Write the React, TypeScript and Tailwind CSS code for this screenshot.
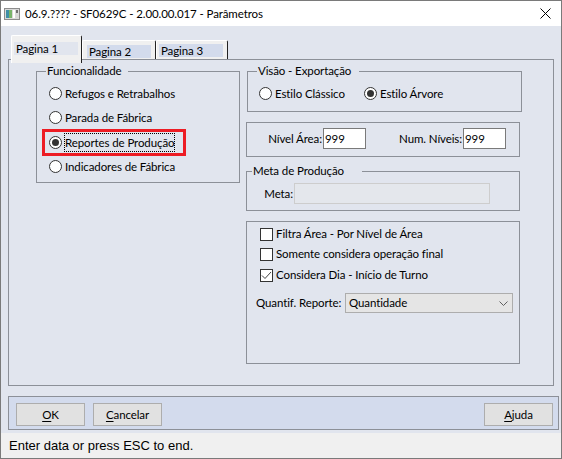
import React from "react";

const UI = "font-['Lato','Liberation_Sans',sans-serif] text-[11.5px] tracking-[-0.1px] text-black whitespace-nowrap";

function Radio({ checked }: { checked?: boolean }) {
  return (
    <span className="w-[13px] h-[13px] rounded-full border border-[#333333] bg-white flex items-center justify-center shrink-0">
      {checked && <span className="w-[7px] h-[7px] rounded-full bg-[#333333]" />}
    </span>
  );
}

function Check({ checked }: { checked?: boolean }) {
  return (
    <span className="w-[13px] h-[13px] border border-[#333333] bg-white flex items-center justify-center shrink-0">
      {checked && (
        <svg width="11" height="11" viewBox="0 0 11 11">
          <path d="M1 5.5 L4 8.5 L10 2" fill="none" stroke="#444" strokeWidth="1" />
        </svg>
      )}
    </span>
  );
}

function RadioRow({ label, checked, focused, className }: { label: string; checked?: boolean; focused?: boolean; className: string }) {
  return (
    <div className={"flex items-center " + className}>
      <Radio checked={checked} />
      <span
        className={
          "ml-[2px] px-0 leading-[17px] border " +
          (focused ? "border-dotted border-black" : "border-transparent")
        }
      >
        {label}
      </span>
    </div>
  );
}

function Tab({ label, active, className }: { label: string; active?: boolean; className: string }) {
  return (
    <div
      className={
        "border-l border-t border-r border-l-white border-t-white border-r-[#222222] bg-[#f0f0f0] rounded-tl-[2px] rounded-tr-[2px] " +
        className
      }
    >
      <div
        className={
          "w-[64px] h-[13px] leading-[13px] pl-[2px] " + (active ? "bg-[#e1e5ee]" : "bg-[#d3dbec]")
        }
      >
        {label}
      </div>
    </div>
  );
}

function Button({ first, rest }: { first: string; rest: string }) {
  return (
    <div className="w-[69px] h-[23px] bg-[#e1e1e1] border border-[#adadad] flex items-center justify-center leading-[14px]">
      <span>
        <span className="underline underline-offset-[2px]">{first}</span>
        {rest}
      </span>
    </div>
  );
}

export default function App() {
  return (
    <div className={"w-[562px] h-[459px] flex flex-col bg-[#e1e5ee] border border-[#7a7a7a] overflow-hidden " + UI}>
      {/* Title bar */}
      <div className="h-[25px] bg-white flex items-center shrink-0">
        <svg className="ml-[3px]" width="16" height="12" viewBox="0 0 16 12">
          <rect x="0.5" y="0.5" width="15" height="11" fill="#d9d9d9" stroke="#8c8c8c" />
          <rect x="2" y="2" width="6" height="8" fill="#3f8fa6" />
          <rect x="5" y="2" width="3" height="8" fill="#79b46a" />
          <rect x="9" y="2" width="2" height="8" fill="#ffffff" />
          <rect x="12" y="2" width="2" height="3" fill="#6f6f6f" />
        </svg>
        <span className="ml-[5px] leading-[14px] text-[11.5px]">06.9.???? - SF0629C - 2.00.00.017 - Parâmetros</span>
        <svg className="ml-auto mr-[10px]" width="11" height="11" viewBox="0 0 11 11">
          <path d="M0.5 0.5 L10.5 10.5 M10.5 0.5 L0.5 10.5" stroke="#000" strokeWidth="1" />
        </svg>
      </div>

      {/* Body */}
      <div className="flex flex-col pl-[7px] shrink-0">
        {/* Tab strip */}
        <div className="mt-[9px] h-[24px] flex items-end pl-[3px]">
          <Tab label="Pagina 1" active className="relative z-10 w-[71px] h-[28px] -mb-[4px] pl-[2px] pt-[6px]" />
          <Tab label="Pagina 2" className="w-[74px] h-[19px] pl-[4px] pt-[4px]" />
          <Tab label="Pagina 3" className="w-[72px] h-[19px] pl-[2px] pt-[3px]" />
        </div>

        {/* Tab panel */}
        <div className="w-[546px] h-[327px] border border-[#8c9098] flex pl-[27px] pt-[11px]">
          {/* Left group */}
          <div className="relative w-[204px] h-[112px] border border-[#8c9098] shrink-0">
            <div className="-mt-[8px] ml-[9px] w-fit bg-[#e1e5ee] pl-[1px] pr-[6px] leading-[14px]">Funcionalidade</div>
            <div className="mt-[3px] pl-[12px] flex flex-col">
              <RadioRow label="Refugos e Retrabalhos" className="h-[24px]" />
              <RadioRow label="Parada de Fábrica" className="h-[25px]" />
              <RadioRow label="Reportes de Produção" checked focused className="h-[24px]" />
              <RadioRow label="Indicadores de Fábrica" className="h-[24px]" />
            </div>
            <div className="absolute left-[5px] top-[57px] w-[144px] h-[27px] border-[3px] border-[#ed1c24]" />
          </div>

          {/* Right column */}
          <div className="ml-[6px] flex flex-col">
            {/* Visão */}
            <div className="ml-[1px] w-[275px] h-[41px] border border-[#8c9098]">
              <div className="-mt-[8px] ml-[9px] w-fit bg-[#e1e5ee] pl-[1px] pr-[8px] leading-[14px]">Visão - Exportação</div>
              <div className="mt-[3px] h-[24px] pl-[11px] flex items-center">
                <RadioRow label="Estilo Clássico" className="h-[24px] w-[105px]" />
                <RadioRow label="Estilo Árvore" checked className="h-[24px]" />
              </div>
            </div>

            {/* Nível */}
            <div className="mt-[10px] w-[274px] h-[35px] border border-[#8c9098] flex items-start pt-[5px]">
              <span className="w-[76px] h-[21px] leading-[21px] text-right pr-[1px]">Nível Área:</span>
              <div className="w-[43px] h-[21px] bg-white border border-[#7a7a7a] leading-[19px] pl-[1px]">999</div>
              <span className="w-[97px] h-[21px] leading-[21px] text-right pr-[1px]">Num. Níveis:</span>
              <div className="w-[43px] h-[21px] bg-white border border-[#7a7a7a] leading-[19px] pl-[1px]">999</div>
            </div>

            {/* Meta */}
            <div className="mt-[14px] w-[274px] h-[40px] border border-[#8c9098]">
              <div className="-mt-[8px] ml-[5px] w-fit bg-[#e1e5ee] pl-[1px] pr-[18px] leading-[14px]">Meta de Produção</div>
              <div className="mt-[5px] flex items-center">
                <span className="w-[47px] text-right pr-[1px] leading-[21px]">Meta:</span>
                <div className="w-[196px] h-[21px] bg-[#e4e7ec] border border-[#cdcdcd]" />
              </div>
            </div>

            {/* Options */}
            <div className="mt-[10px] w-[274px] h-[143px] border border-[#8c9098] pt-[2px] flex flex-col">
              <div className="h-[20px] pl-[13px] flex items-center">
                <Check />
                <span className="ml-[3px]">Filtra Área - Por Nível de Área</span>
              </div>
              <div className="h-[20px] pl-[13px] flex items-center">
                <Check />
                <span className="ml-[3px]">Somente considera operação final</span>
              </div>
              <div className="mt-[1px] h-[20px] pl-[13px] flex items-center">
                <Check checked />
                <span className="ml-[3px]">Considera Dia - Início de Turno</span>
              </div>
              <div className="mt-[8px] flex items-center">
                <span className="w-[98px] pl-[9px] leading-[20px]">Quantif. Reporte:</span>
                <div className="w-[168px] h-[20px] bg-[#e5e5e5] border border-[#adadad] flex items-center pl-[3px] pr-[4px]">
                  <span className="leading-[18px]">Quantidade</span>
                  <svg className="ml-auto" width="9" height="5" viewBox="0 0 9 5">
                    <path d="M0.5 0.5 L4.5 4.5 L8.5 0.5" fill="none" stroke="#606060" strokeWidth="1" />
                  </svg>
                </div>
              </div>
            </div>
          </div>
        </div>

        {/* Button bar */}
        <div className="mt-[10px] w-[551px] h-[34px] bg-[#d3dbed] border border-[#8c9098] flex items-start pt-[6px] pl-[7px] pr-[5px] gap-[8px]">
          <Button first="O" rest="K" />
          <Button first="C" rest="ancelar" />
          <div className="ml-auto">
            <Button first="A" rest="juda" />
          </div>
        </div>
      </div>

      {/* Status bar */}
      <div className="mt-[3px] h-[25px] bg-[#f0f0f0] flex items-center pl-[8px] font-['Liberation_Sans',Arial,sans-serif] text-[13px] tracking-normal shrink-0">
        Enter data or press ESC to end.
      </div>
    </div>
  );
}
